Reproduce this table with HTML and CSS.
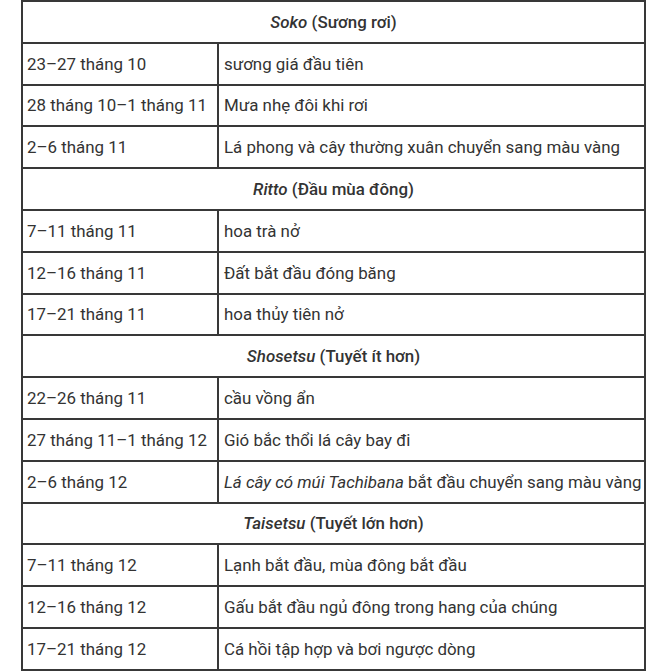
FILE: index.html
```html
<!DOCTYPE html>
<html lang="vi">
<head>
<meta charset="utf-8">
<title>Lịch Thất thập nhị hậu</title>
<link rel="stylesheet" href="styles.css">
</head>
<body>
<table class="season-table">
  <colgroup>
    <col class="col-date">
    <col class="col-desc">
  </colgroup>
  <tbody>
    <tr class="season"><th colspan="2"><i>Soko</i> (Sương rơi)</th></tr>
    <tr><td>23–27 tháng 10</td><td>sương giá đầu tiên</td></tr>
    <tr><td>28 tháng 10–1 tháng 11</td><td>Mưa nhẹ đôi khi rơi</td></tr>
    <tr><td>2–6 tháng 11</td><td>Lá phong và cây thường xuân chuyển sang màu vàng</td></tr>
    <tr class="season"><th colspan="2"><i>Ritto</i> (Đầu mùa đông)</th></tr>
    <tr><td>7–11 tháng 11</td><td>hoa trà nở</td></tr>
    <tr><td>12–16 tháng 11</td><td>Đất bắt đầu đóng băng</td></tr>
    <tr><td>17–21 tháng 11</td><td>hoa thủy tiên nở</td></tr>
    <tr class="season"><th colspan="2"><i>Shosetsu</i> (Tuyết ít hơn)</th></tr>
    <tr><td>22–26 tháng 11</td><td>cầu vồng ẩn</td></tr>
    <tr><td>27 tháng 11–1 tháng 12</td><td>Gió bắc thổi lá cây bay đi</td></tr>
    <tr><td>2–6 tháng 12</td><td><i>Lá cây có múi Tachibana</i> bắt đầu chuyển sang màu vàng</td></tr>
    <tr class="season"><th colspan="2"><i>Taisetsu</i> (Tuyết lớn hơn)</th></tr>
    <tr><td>7–11 tháng 12</td><td>Lạnh bắt đầu, mùa đông bắt đầu</td></tr>
    <tr><td>12–16 tháng 12</td><td>Gấu bắt đầu ngủ đông trong hang của chúng</td></tr>
    <tr><td>17–21 tháng 12</td><td>Cá hồi tập hợp và bơi ngược dòng</td></tr>
  </tbody>
</table>
</body>
</html>
```
FILE: styles.css
```css
html, body {
  margin: 0;
  padding: 0;
  background: #ffffff;
}
body {
  font-family: Roboto, "Noto Sans", "Liberation Sans", sans-serif;
  font-size: 16.9px;
  color: #333333;
  padding-left: 21px;
}
.season-table {
  border-collapse: collapse;
  width: 625px;
  table-layout: fixed;
}
.col-date { width: 196px; }
.season-table th,
.season-table td {
  border: 2px solid #383838;
  height: 41.8px;
  padding: 0 4px;
  box-sizing: border-box;
  line-height: 20px;
  vertical-align: middle;
  white-space: nowrap;
}
.season-table th {
  font-weight: 500;
  text-align: center;
}
.season-table td {
  text-align: left;
  font-weight: 400;
}
.season-table td + td {
  padding-left: 5px;
}
```
